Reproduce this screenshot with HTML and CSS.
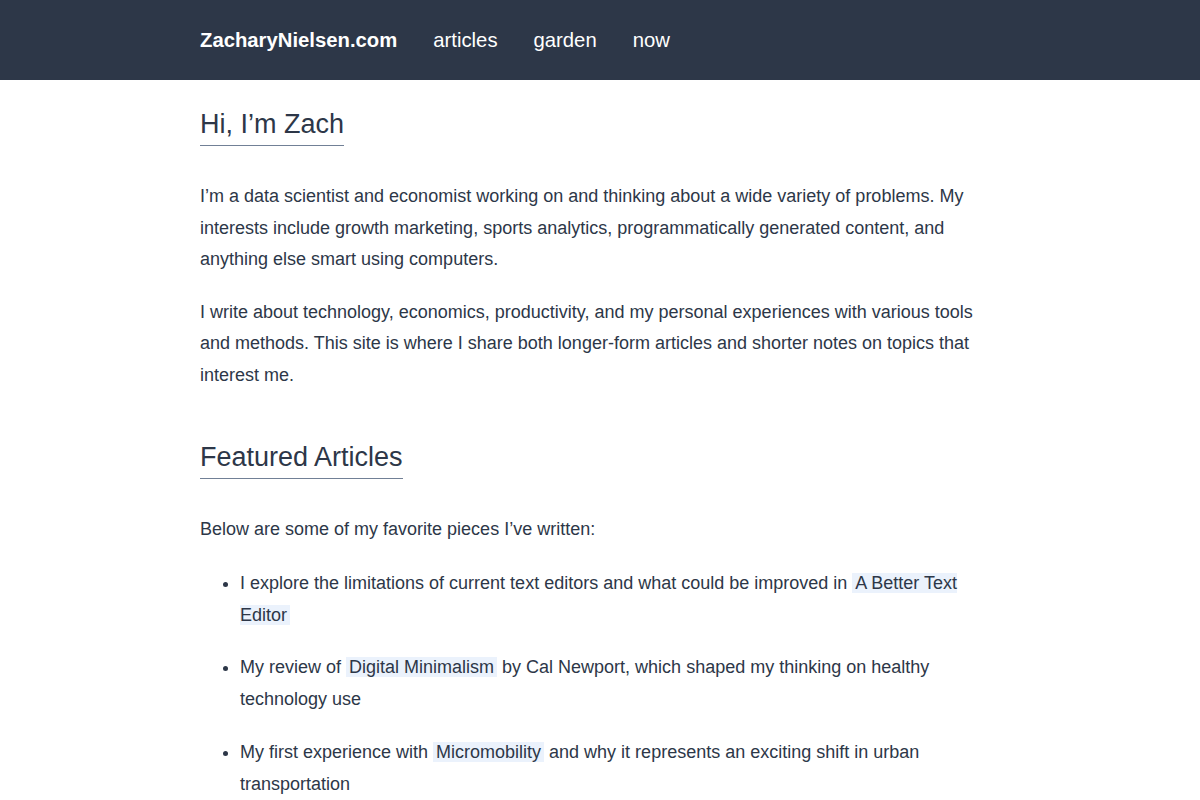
FILE: index.html
```html
<!DOCTYPE html>
<html lang="en">
<head>
  <meta charset="UTF-8">
  <meta name="viewport" content="width=device-width, initial-scale=1.0">
  <title>Zachary Nielsen</title>
  <link rel="stylesheet" href="styles.css">
</head>
<body>
  <header class="site-header">
    <nav class="nav">
      <a class="brand" href="#">ZacharyNielsen.com</a>
      <a class="nav-link" href="#">articles</a>
      <a class="nav-link" href="#">garden</a>
      <a class="nav-link" href="#">now</a>
    </nav>
  </header>

  <main class="content">
    <h1 class="section-title intro">Hi, I’m Zach</h1>
    <p>I’m a data scientist and economist working on and thinking about a wide variety of problems. My interests include growth marketing, sports analytics, programmatically generated content, and anything else smart using computers.</p>
    <p>I write about technology, economics, productivity, and my personal experiences with various tools and methods. This site is where I share both longer-form articles and shorter notes on topics that interest me.</p>

    <h2 class="section-title featured">Featured Articles</h2>
    <p>Below are some of my favorite pieces I’ve written:</p>
    <ul class="article-list">
      <li>I explore the limitations of current text editors and what could be improved in <a class="link" href="#">A Better Text Editor</a></li>
      <li>My review of <a class="link" href="#">Digital Minimalism</a> by Cal Newport, which shaped my thinking on healthy technology use</li>
      <li>My first experience with <a class="link" href="#">Micromobility</a> and why it represents an exciting shift in urban transportation</li>
    </ul>
  </main>
</body>
</html>
```

FILE: styles.css
```css
* {
  margin: 0;
  padding: 0;
  box-sizing: border-box;
}

body {
  font-family: 'Liberation Sans', Arial, sans-serif;
  background-color: #fff;
  color: #2d3748;
  font-size: 18px;
  line-height: 1.75;
}

.site-header {
  background-color: #2d3748;
  height: 80px;
}

.nav {
  max-width: 800px;
  margin: 0 auto;
  height: 100%;
  display: flex;
  align-items: center;
  gap: 36px;
}

.nav a {
  color: #fff;
  text-decoration: none;
  font-size: 20.3px;
  line-height: 1.2;
}

.brand {
  font-weight: bold;
}

.content {
  max-width: 800px;
  margin: 0 auto;
}

.section-title {
  display: inline-block;
  font-size: 27px;
  font-weight: normal;
  line-height: 1.2;
  padding-bottom: 5px;
  border-bottom: 1px solid #718096;
  margin-top: 28px;
  margin-bottom: 35px;
}

.featured {
  margin-top: 28.5px;
}

p {
  margin-bottom: 21px;
}

.article-list {
  padding-left: 40px;
}

.article-list li {
  line-height: 32px;
  margin-bottom: 20.5px;
}

.link {
  color: #2d3748;
  text-decoration: none;
  background-color: #ebf2fc;
  padding: 0 3px;
}
```
